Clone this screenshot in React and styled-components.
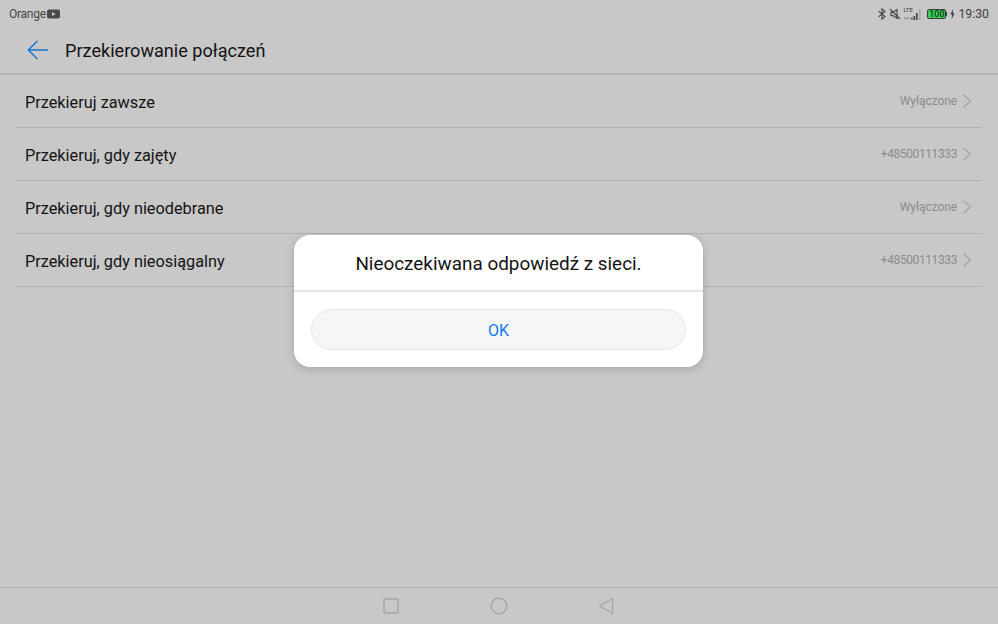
import styled, { createGlobalStyle } from "styled-components";

const GlobalStyle = createGlobalStyle`
  html, body {
    margin: 0;
    padding: 0;
    background: #c8c8c8;
    overflow: hidden;
  }
  * {
    box-sizing: border-box;
  }
`;

const rows = [
  { label: "Przekieruj zawsze", value: "Wyłączone" },
  { label: "Przekieruj, gdy zajęty", value: "+48500111333", digits: true },
  { label: "Przekieruj, gdy nieodebrane", value: "Wyłączone" },
  { label: "Przekieruj, gdy nieosiągalny", value: "+48500111333", digits: true },
];

const App = () => {
  return (
    <>
      <GlobalStyle />
      <Screen>
        <StatusBar>
          <Carrier>
            Orange
            <svg width="13" height="10" viewBox="0 0 13 10">
              <rect x="0" y="0.5" width="13" height="9" rx="2" fill="#4a4a4a" />
              <path d="M5 3 L8.6 5 L5 7 Z" fill="#c8c8c8" />
            </svg>
          </Carrier>
          <StatusIcons>
            <svg width="8" height="12" viewBox="0 0 8 12" fill="none" stroke="#444" strokeWidth="1.1">
              <path d="M0.6 3.2 L7 8.6 L4 11.2 V0.8 L7 3.4 L0.6 8.8" />
            </svg>
            <svg width="12" height="12" viewBox="0 0 12 12" fill="none" stroke="#444" strokeWidth="1.1">
              <path d="M1 1 L11 11" />
              <path d="M2 4.4 H4 L8 1.6 V10.4 L4 7.6 H2 Z" />
            </svg>
            <Signal>
              <NetworkLabel>LTE</NetworkLabel>
              <svg width="18" height="12" viewBox="0 0 18 12">
                <rect x="1" y="9.5" width="6" height="1.6" fill="#9a9a9a" />
                <rect x="8" y="9.5" width="1.6" height="2.5" fill="#666" />
                <rect x="10.5" y="8" width="1.6" height="4" fill="#444" />
                <rect x="13" y="5" width="1.6" height="7" fill="#444" />
                <rect x="16" y="1" width="1.6" height="11" fill="#a8a8a8" />
              </svg>
            </Signal>
            <Battery>
              <BatteryBody>100</BatteryBody>
              <BatteryTip />
            </Battery>
            <svg width="5" height="10" viewBox="0 0 5 10">
              <path d="M3 0 L0.4 5.6 H2 L1.7 10 L4.6 4.2 H3 Z" fill="#444" />
            </svg>
            <Clock>19:30</Clock>
          </StatusIcons>
        </StatusBar>
        <Header>
          <BackButton>
            <svg width="22" height="20" viewBox="0 0 22 20" fill="none" stroke="#1a73d0" strokeWidth="1.5">
              <path d="M21 10 H1.6" />
              <path d="M10.4 1 L1.4 10 L10.4 19" />
            </svg>
          </BackButton>
          <Title>Przekierowanie połączeń</Title>
        </Header>
        <List>
          {rows.map((row) => (
            <Row key={row.label}>
              <RowLabel>{row.label}</RowLabel>
              <RowValue $digits={row.digits}>{row.value}</RowValue>
              <svg width="10" height="14" viewBox="0 0 10 14" fill="none" stroke="#a2a2a2" strokeWidth="1.2">
                <path d="M1.5 0.8 L8.5 7 L1.5 13.2" />
              </svg>
            </Row>
          ))}
        </List>
        <NavBar>
          <svg width="16" height="16" viewBox="0 0 16 16" fill="none" stroke="#a6a6a6" strokeWidth="1.4">
            <rect x="1" y="1" width="14" height="14" rx="1" />
          </svg>
          <svg width="18" height="18" viewBox="0 0 18 18" fill="none" stroke="#a6a6a6" strokeWidth="1.4">
            <circle cx="9" cy="9" r="7.8" />
          </svg>
          <svg width="16" height="18" viewBox="0 0 16 18" fill="none" stroke="#a6a6a6" strokeWidth="1.4">
            <path d="M14.5 1.5 V16.5 L1.5 9 Z" strokeLinejoin="round" />
          </svg>
        </NavBar>
        <Dialog>
          <Message>Nieoczekiwana odpowiedź z sieci.</Message>
          <DialogFooter>
            <OkButton>OK</OkButton>
          </DialogFooter>
        </Dialog>
      </Screen>
    </>
  );
};

export default App;

const Screen = styled.div`
  position: relative;
  width: 998px;
  height: 624px;
  display: flex;
  flex-direction: column;
  background: #c8c8c8;
  font-family: Roboto, "Noto Sans", sans-serif;
  color: #141414;
`;

const StatusBar = styled.div`
  height: 27px;
  padding: 0 9px;
  display: flex;
  align-items: center;
  justify-content: space-between;
`;

const Carrier = styled.div`
  display: flex;
  align-items: center;
  gap: 1px;
  font-size: 12px;
  letter-spacing: -0.25px;
  color: #474747;
`;

const StatusIcons = styled.div`
  display: flex;
  align-items: center;
  gap: 3px;
`;

const Signal = styled.div`
  position: relative;
  width: 18px;
  height: 12px;
  margin-left: -1px;
  display: flex;
`;

const NetworkLabel = styled.span`
  position: absolute;
  left: 0;
  top: -2px;
  font-size: 6px;
  line-height: 7px;
  color: #444;
`;

const Battery = styled.div`
  display: flex;
  align-items: center;
  margin-left: 3px;
`;

const BatteryBody = styled.div`
  width: 19px;
  height: 10px;
  border: 1px solid #3c3c3c;
  border-radius: 2px;
  background: #35d153;
  font-size: 9px;
  font-weight: 500;
  line-height: 8px;
  text-align: center;
  color: #1a3a20;
`;

const BatteryTip = styled.div`
  width: 1px;
  height: 4px;
  background: #3c3c3c;
`;

const Clock = styled.span`
  font-size: 12.3px;
  color: #3e3e3e;
`;

const Header = styled.div`
  height: 48px;
  padding-left: 27px;
  display: flex;
  align-items: center;
  gap: 16px;
  border-bottom: 2px solid #b4b4b4;
`;

const BackButton = styled.div`
  width: 22px;
  height: 20px;
  display: flex;
`;

const Title = styled.div`
  padding-top: 1px;
  font-size: 18.1px;
`;

const List = styled.div`
  flex: 1;
  padding: 0 16px;
`;

const Row = styled.div`
  height: 53px;
  padding: 0 10px 0 9px;
  display: flex;
  align-items: center;
  border-bottom: 1px solid #b2b2b2;
`;

const RowLabel = styled.div`
  flex: 1;
  padding-top: 2px;
  font-size: 16.3px;
`;

const RowValue = styled.div`
  margin-right: 5px;
  font-size: 12px;
  letter-spacing: ${(props) => (props.$digits ? "-0.4px" : "-0.1px")};
  color: #8c8c8c;
`;

const NavBar = styled.div`
  height: 37px;
  padding-right: 1px;
  border-top: 1px solid #b0b0b0;
  display: flex;
  align-items: center;
  justify-content: center;
  gap: 90px;

  svg:first-child {
    margin-right: 1px;
  }
`;

const Dialog = styled.div`
  position: absolute;
  left: 294px;
  top: 235px;
  width: 409px;
  height: 132px;
  display: flex;
  flex-direction: column;
  background: #fff;
  border-radius: 16px;
  box-shadow: 0 2px 8px rgba(0, 0, 0, 0.18);
`;

const Message = styled.div`
  height: 58px;
  padding-top: 2px;
  display: flex;
  align-items: center;
  justify-content: center;
  font-size: 18.9px;
  border-bottom: 2px solid #e4e4e4;
`;

const DialogFooter = styled.div`
  flex: 1;
  padding: 17px;
`;

const OkButton = styled.div`
  height: 41px;
  padding-top: 1px;
  display: flex;
  align-items: center;
  justify-content: center;
  background: #f6f6f6;
  border: 1px solid #e6e6e6;
  border-radius: 21px;
  font-size: 16px;
  color: #0a7cf0;
`;
